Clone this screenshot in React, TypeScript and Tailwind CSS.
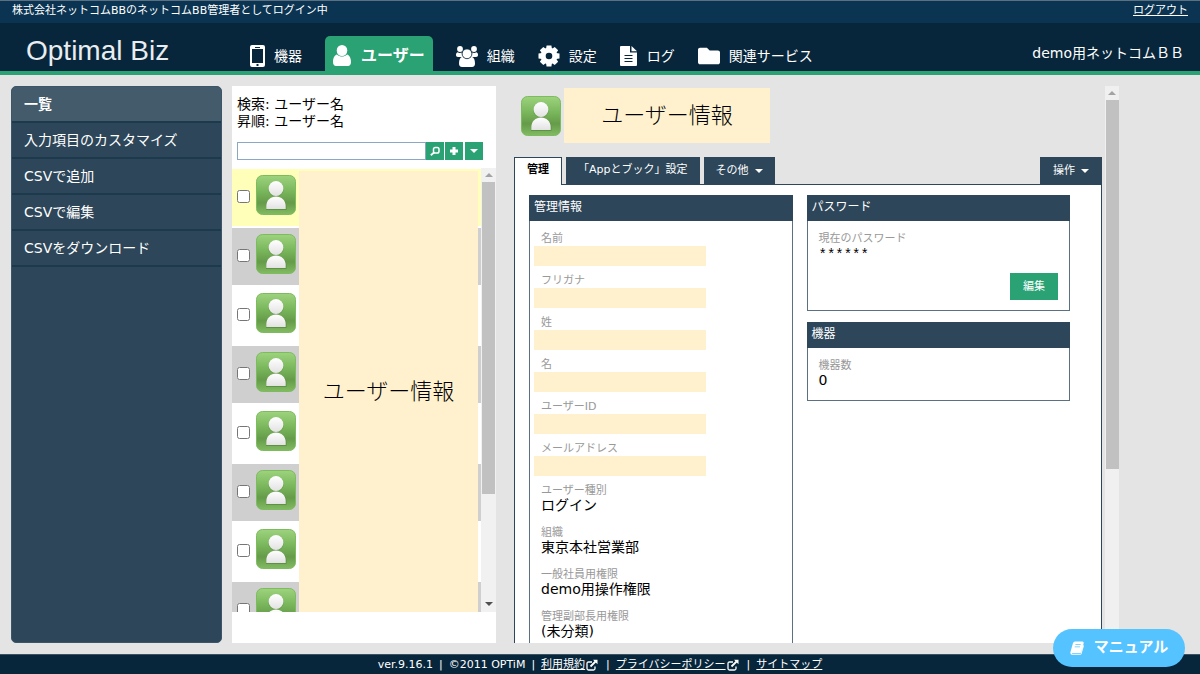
import React, { useState } from 'react';
import { FaFolder } from 'react-icons/fa';

interface IconProps {
  className?: string;
}

interface Field {
  label: string;
  value?: string;
}

const sideMenu = ['一覧', '入力項目のカスタマイズ', 'CSVで追加', 'CSVで編集', 'CSVをダウンロード'];

const fields: Field[] = [
  { label: '名前' },
  { label: 'フリガナ' },
  { label: '姓' },
  { label: '名' },
  { label: 'ユーザーID' },
  { label: 'メールアドレス' },
  { label: 'ユーザー種別', value: 'ログイン' },
  { label: '組織', value: '東京本社営業部' },
  { label: '一般社員用権限', value: 'demo用操作権限' },
  { label: '管理副部長用権限', value: '(未分類)' },
];

function PhoneIcon({ className }: IconProps) {
  return (
    <svg viewBox="0 0 15 22" className={className} aria-hidden="true">
      <path
        fill="currentColor"
        fillRule="evenodd"
        d="M2 0h11a2 2 0 0 1 2 2v18a2 2 0 0 1-2 2H2a2 2 0 0 1-2-2V2a2 2 0 0 1 2-2zm0 4v14h11V4zM5 2v1h5V2zm1.500 17v2h2v-2z"
      />
    </svg>
  );
}

function UserIcon({ className }: IconProps) {
  return (
    <svg viewBox="0 0 18 21" className={className} aria-hidden="true">
      <ellipse cx="9" cy="5.500" rx="5.300" ry="5.500" fill="currentColor" />
      <path fill="currentColor" d="M4 9.500c3 2.700 7 2.700 10 0 2.600.7 4 3.700 4 7.500 0 2.700-1.300 4-3 4H3c-1.700 0-3-1.300-3-4 0-3.800 1.400-6.800 4-7.500z" />
    </svg>
  );
}

function GroupIcon({ className }: IconProps) {
  return (
    <svg viewBox="0 0 22 21" className={className} aria-hidden="true">
      <g fill="currentColor">
        <circle cx="4" cy="3" r="2.900" />
        <circle cx="18" cy="3" r="2.900" />
        <path d="M1.500 6.200c1.500 1 3 1 4.200.3.200 1.900.9 3.300 2.100 4.500H2c-1.300 0-2-.8-2-2 0-1.300.5-2.400 1.500-2.800z" />
        <path d="M20.500 6.200c-1.500 1-3 1-4.200.3-.2 1.900-.9 3.300-2.100 4.500H20c1.300 0 2-.8 2-2 0-1.300-.5-2.400-1.500-2.800z" />
        <path d="M6.500 10.800c2.700 2.300 6.300 2.300 9 0 2.500.7 3.500 3.200 3.500 6.700 0 2.200-1 3.500-3 3.500H6c-2 0-3-1.300-3-3.500 0-3.500 1-6 3.500-6.700z" />
        <circle cx="11" cy="7.800" r="4.900" stroke="#08263b" strokeWidth=".8" />
      </g>
    </svg>
  );
}

function GearIcon({ className }: IconProps) {
  return (
    <svg viewBox="0 0 22 22" className={className} aria-hidden="true">
      <circle cx="11" cy="11" r="5.800" fill="none" stroke="currentColor" strokeWidth="5" />
      {[0, 45, 90, 135, 180, 225, 270, 315].map(angle => (
        <path key={angle} fill="currentColor" d="M8 4 8.600.5h4.800L14 4z" transform={`rotate(${angle} 11 11)`} />
      ))}
    </svg>
  );
}

function FileIcon({ className }: IconProps) {
  return (
    <svg viewBox="0 0 18 20" className={className} aria-hidden="true">
      <path fill="currentColor" fillRule="evenodd" d="M1 0h9v6.500h7V19a1 1 0 0 1-1 1H1a1 1 0 0 1-1-1V1a1 1 0 0 1 1-1zm3.500 9v1h8V9zm0 3v1h8v-1zm0 3v1h8v-1z" />
      <path fill="currentColor" d="M11.500 0 17 5.200h-5.500z" />
    </svg>
  );
}

function ExternalIcon() {
  return (
    <svg viewBox="0 0 12 12" className="mr-[2px] ml-px size-3 shrink-0" aria-hidden="true">
      <path d="M6 3H2.500Q1 3 1 4.500v5Q1 11 2.500 11h5Q9 11 9 9.500V7.500" fill="none" stroke="currentColor" strokeWidth="1.300" />
      <path d="M4.500 7.500 9.500 2.500" stroke="currentColor" strokeWidth="1.800" />
      <path fill="currentColor" d="M7 .8h4.500v4.500z" />
    </svg>
  );
}

function SearchIcon() {
  return (
    <svg viewBox="0 0 18 18" className="size-[18px]" aria-hidden="true">
      <rect x="7.500" y="5.500" width="5.500" height="5.500" rx="1.800" fill="none" stroke="white" strokeWidth="1.500" />
      <path d="m8 10.500-3.200 2.700" stroke="white" strokeWidth="1.800" />
    </svg>
  );
}

function BookIcon({ className }: IconProps) {
  return (
    <svg viewBox="0 0 14 14" className={className} aria-hidden="true">
      <path
        fill="white"
        fillRule="evenodd"
        d="M5 .5h7.500q1.500 0 1.200 1.500L11.500 11q-.3 1-1.500 1H2.500q-.8 0-.5.700h8.800L13.300 4q.7.300.5 1.300L11.600 12.800q-.3 1-1.500 1H2Q.2 13.800.3 11.500L3 2Q3.500.5 5 .5zm.6 2.700-.3.900h5.200l.3-.9zm-.7 2.200-.3.900h5.200l.3-.9z"
      />
    </svg>
  );
}

function Caret({ up = false, className = '' }: { up?: boolean; className?: string }) {
  return (
    <svg viewBox="0 0 8 4" className={`h-1 w-2 shrink-0 ${className}`} aria-hidden="true">
      <path d={up ? 'M0 4 4 0l4 4z' : 'M0 0h8L4 4z'} fill="currentColor" />
    </svg>
  );
}

function Avatar() {
  return (
    <svg viewBox="0 0 40 40" className="size-10 shrink-0" role="img" aria-label="ユーザー">
      <defs>
        <linearGradient id="avatarGreen" x1="0" y1="0" x2="0" y2="1">
          <stop offset="0" stopColor="#9dd37d" />
          <stop offset=".4" stopColor="#7ab75c" />
          <stop offset=".7" stopColor="#659b49" />
          <stop offset="1" stopColor="#82bb62" />
        </linearGradient>
        <linearGradient id="avatarWhite" x1="0" y1="0" x2="0" y2="1">
          <stop offset="0" stopColor="#ffffff" />
          <stop offset="1" stopColor="#e2e2e2" />
        </linearGradient>
      </defs>
      <rect x=".5" y=".5" width="39" height="39" rx="6" fill="url(#avatarGreen)" stroke="#7dbb5f" />
      <path d="M10 35v-3c0-6 4.500-10.500 10-10.500S30.500 26 30.500 32v3z" fill="#46752f" opacity=".5" />
      <circle cx="20" cy="14" r="7.800" fill="#46752f" opacity=".3" />
      <path d="M10.300 34v-3c0-5.500 4.200-9.500 9.700-9.500s9.700 4 9.700 9.500v3z" fill="url(#avatarWhite)" />
      <circle cx="20" cy="13.500" r="7.400" fill="url(#avatarWhite)" />
    </svg>
  );
}

function NavItem({ icon, label }: { icon: React.ReactNode; label: string }) {
  return (
    <a href="#" className="flex h-[30px] items-center gap-[9px] text-sm whitespace-nowrap">
      {icon}
      <span>{label}</span>
    </a>
  );
}

function Card({ title, className = '', children }: { title: string; className?: string; children: React.ReactNode }) {
  return (
    <section className={`border border-[#5b7080] bg-white ${className}`}>
      <h2 className="-mx-px -mt-px h-[26px] bg-[#2d4659] px-[5px] text-xs leading-[25px] text-white">{title}</h2>
      <div className="px-[11px] pt-[10px]">{children}</div>
    </section>
  );
}

export default function App() {
  const [keyword, setKeyword] = useState('');

  return (
    <div className="flex h-screen flex-col overflow-hidden bg-[#e4e4e4] font-['DejaVu_Sans','Noto_Sans_CJK_JP',sans-serif] text-sm text-black">
      {/* Login bar */}
      <div className="flex h-[23px] shrink-0 justify-between border-t border-[#5b7080] bg-[#0a3452] px-3 text-[11px] leading-5 text-white">
        <p>株式会社ネットコムBBのネットコムBB管理者としてログイン中</p>
        <a href="#" className="underline">ログアウト</a>
      </div>

      {/* Header */}
      <header className="flex h-[52px] shrink-0 border-b-4 border-[#2aa274] bg-[#08263b] pr-4 pl-[26px] text-white">
        <h1 className="w-[224px] shrink-0 font-['Liberation_Sans',sans-serif] text-[28px] leading-[55px] text-[#e9edf0]">Optimal Biz</h1>
        <nav className="flex items-end gap-[23px]">
          <NavItem icon={<PhoneIcon className="h-[22px] w-[15px]" />} label="機器" />
          <a href="#" className="flex h-[35px] items-center gap-[10px] rounded-t-[5px] bg-[#2aa274] px-2 pt-1 text-base font-bold whitespace-nowrap">
            <UserIcon className="h-[21px] w-[18px]" />
            <span>ユーザー</span>
          </a>
          <NavItem icon={<GroupIcon className="h-[21px] w-[22px]" />} label="組織" />
          <NavItem icon={<GearIcon className="size-[22px]" />} label="設定" />
          <NavItem icon={<FileIcon className="h-5 w-[18px]" />} label="ログ" />
          <NavItem icon={<FaFolder className="size-[22px]" />} label="関連サービス" />
        </nav>
        <p className="ml-auto pt-[20px] text-sm leading-5 whitespace-nowrap">demo用ネットコムＢＢ</p>
      </header>

      <main className="flex min-h-0 flex-1 py-[11px] pr-[81px] pl-[11px]">
        {/* Side menu */}
        <nav className="w-[211px] shrink-0 overflow-hidden rounded-[5px] border border-[#3d5568] bg-[#2d4659] text-white">
          {sideMenu.map((item, i) => (
            <a
              key={item}
              href="#"
              className={`block h-9 border-b-2 border-[#1d394c] px-3 leading-[34px] ${i === 0 ? 'bg-[#445b6b] font-bold' : ''}`}
            >
              {item}
            </a>
          ))}
        </nav>

        {/* User list */}
        <section className="ml-[10px] flex w-[264px] shrink-0 flex-col bg-white pb-[31px]">
          <div className="px-[5px] pt-[10px]">
            <p className="leading-[17px]">検索: ユーザー名</p>
            <p className="leading-[17px]">昇順: ユーザー名</p>
            <form className="mt-3 flex pr-2" onSubmit={e => e.preventDefault()}>
              <input
                type="text"
                aria-label="検索"
                value={keyword}
                onChange={e => setKeyword(e.target.value)}
                className="h-[18px] min-w-0 flex-1 border border-[#8aa8c4] bg-white px-1 text-xs outline-none"
              />
              <button type="submit" aria-label="検索する" className="size-[18px] bg-[#2aa274]">
                <SearchIcon />
              </button>
              <button type="button" aria-label="追加" className="ml-px flex size-[18px] items-center justify-center bg-[#2aa274]">
                <svg viewBox="0 0 8 8" className="size-2" aria-hidden="true">
                  <path d="M4 0v8M0 4h8" stroke="white" strokeWidth="3" />
                </svg>
              </button>
              <button type="button" aria-label="メニュー" className="ml-[2px] flex size-[18px] items-center justify-center bg-[#2aa274] text-white">
                <Caret />
              </button>
            </form>
          </div>
          <div className="mt-[8px] flex min-h-0 flex-1">
            <div className="relative flex-1 overflow-hidden pt-px">
              <ul>
                {Array.from({ length: 8 }, (_, i) => (
                  <li
                    key={i}
                    className={`mb-[2px] flex h-[57px] gap-[6px] pt-[6px] pl-[5px] ${
                      i === 0 ? 'bg-[#ffffba]' : i % 2 ? 'bg-[#cfcfcf]' : 'bg-white'
                    }`}
                  >
                    <input type="checkbox" aria-label={`ユーザー${i + 1}を選択`} className="mt-[15px] size-[13px] shrink-0" />
                    <Avatar />
                  </li>
                ))}
              </ul>
              <div className="absolute top-[3px] right-[3px] bottom-0 left-[67px] flex items-center justify-center bg-[#fff1ce] text-[22px] font-light">
                ユーザー情報
              </div>
            </div>
            <div className="flex w-[15px] shrink-0 flex-col items-center bg-[#f1f1f1]">
              <Caret up className="my-[5px] text-[#a3a3a3]" />
              <div className="h-[312px] w-[13px] bg-[#c1c1c1]" />
              <Caret className="mt-auto mb-[6px] text-[#505050]" />
            </div>
          </div>
        </section>

        {/* User detail */}
        <section className="ml-[18px] flex min-w-0 flex-1 flex-col overflow-hidden">
          <div className="flex items-center gap-[3px] pt-[2px] pl-[7px]">
            <Avatar />
            <p className="flex h-[55px] w-[206px] items-center justify-center bg-[#fff1ce] text-[22px] font-light">ユーザー情報</p>
          </div>
          <div className="mt-[14px] flex items-end gap-1 text-[11px] text-white">
            <button type="button" className="relative z-10 -mb-px h-7 w-12 border border-b-0 border-[#2d4659] bg-white pb-1 font-bold text-black">管理</button>
            <button type="button" className="h-[27px] bg-[#2d4659] px-3 pb-[2px]">「Appとブック」設定</button>
            <button type="button" className="flex h-[27px] items-center gap-[6px] bg-[#2d4659] px-3">
              その他 <Caret />
            </button>
            <button type="button" className="ml-auto flex h-[27px] items-center gap-[6px] bg-[#2d4659] px-[13px]">
              操作 <Caret />
            </button>
          </div>
          <div className="grid min-h-0 flex-1 grid-cols-2 gap-[14px] border border-b-0 border-[#2d4659] bg-white pt-[10px] pr-[31px] pl-[14px]">
            <Card title="管理情報">
              <dl>
                {fields.map(({ label, value }) => (
                  <div key={label} className="h-[42px]">
                    <dt className="text-[11px] leading-[15px] text-[#999]">{label}</dt>
                    {value ? (
                      <dd className="text-sm leading-[14px]">{value}</dd>
                    ) : (
                      <dd className="-ml-[7px] h-5 w-[172px] bg-[#fff1ce]" />
                    )}
                  </div>
                ))}
              </dl>
            </Card>
            <div>
              <Card title="パスワード" className="h-[116px]">
                <p className="text-[11px] leading-[15px] text-[#999]">現在のパスワード</p>
                <p className="font-['Liberation_Mono',monospace] leading-[18px]">******</p>
                <button type="button" className="mt-[9px] ml-auto block h-[27px] w-12 bg-[#2aa274] text-[11px] text-white">編集</button>
              </Card>
              <Card title="機器" className="mt-[11px] h-[79px]">
                <p className="text-[11px] leading-[15px] text-[#999]">機器数</p>
                <p className="leading-[14px]">0</p>
              </Card>
            </div>
          </div>
        </section>
        <div className="ml-[3px] flex w-[14px] shrink-0 flex-col items-center bg-[#f0f0f0]">
          <Caret up className="my-[5px] text-[#a3a3a3]" />
          <div className="h-[369px] w-[13px] bg-[#c1c1c1]" />
        </div>
      </main>

      <footer className="flex h-5 shrink-0 items-center justify-center gap-[6px] border-t border-[#3b5263] bg-[#08263b] text-[11px] leading-[19px] text-white">
        <span>ver.9.16.1</span>
        <span>|</span>
        <span>©2011 OPTiM</span>
        <span>|</span>
        <span className="flex items-center"><a href="#" className="underline">利用規約</a><ExternalIcon /></span>
        <span>|</span>
        <span className="flex items-center"><a href="#" className="underline">プライバシーポリシー</a><ExternalIcon /></span>
        <span>|</span>
        <a href="#" className="underline">サイトマップ</a>
      </footer>

      <button type="button" className="fixed right-[15px] bottom-[7px] flex h-[38px] w-[132px] items-center justify-center gap-[10px] rounded-full bg-[#54c3ff] text-[15px] font-bold text-white">
        <BookIcon className="size-[14px]" />
        マニュアル
      </button>
    </div>
  );
}
